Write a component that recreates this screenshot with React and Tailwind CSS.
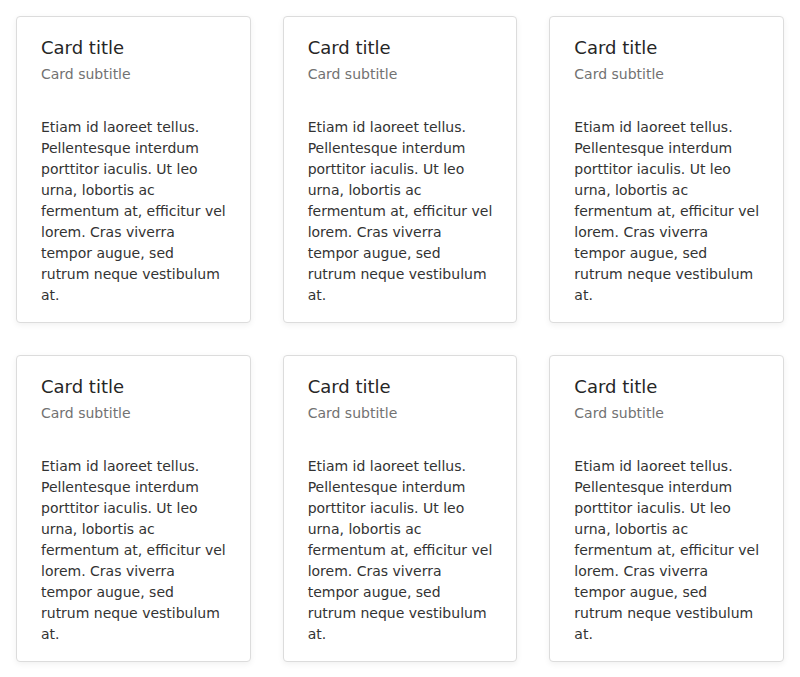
import React from 'react';

const text =
  'Etiam id laoreet tellus. Pellentesque interdum porttitor iaculis. Ut leo urna, lobortis ac fermentum at, efficitur vel lorem. Cras viverra tempor augue, sed rutrum neque vestibulum at.';

function Card() {
  return (
    <div className="bg-white border border-[#dcdcdc] rounded-[4px] shadow-[0_2px_6px_rgba(0,0,0,0.06)] px-6 pt-4 pb-4">
      <h2 className="text-[18px] leading-[30px] text-[#262626] font-normal">Card title</h2>
      <h3 className="mt-[1px] text-[14px] leading-[20px] text-[#727272] font-normal">Card subtitle</h3>
      <p className="mt-[33px] mr-[-1px] text-[14px] leading-[21px] text-[#333333]">{text}</p>
    </div>
  );
}

export default function App() {
  return (
    <div className="p-4 bg-white min-h-screen" style={{ fontFamily: '"DejaVu Sans", sans-serif' }}>
      <div className="grid grid-cols-3 gap-8">
        {[1, 2, 3, 4, 5, 6].map(i => <Card key={i} />)}
      </div>
    </div>
  );
}
